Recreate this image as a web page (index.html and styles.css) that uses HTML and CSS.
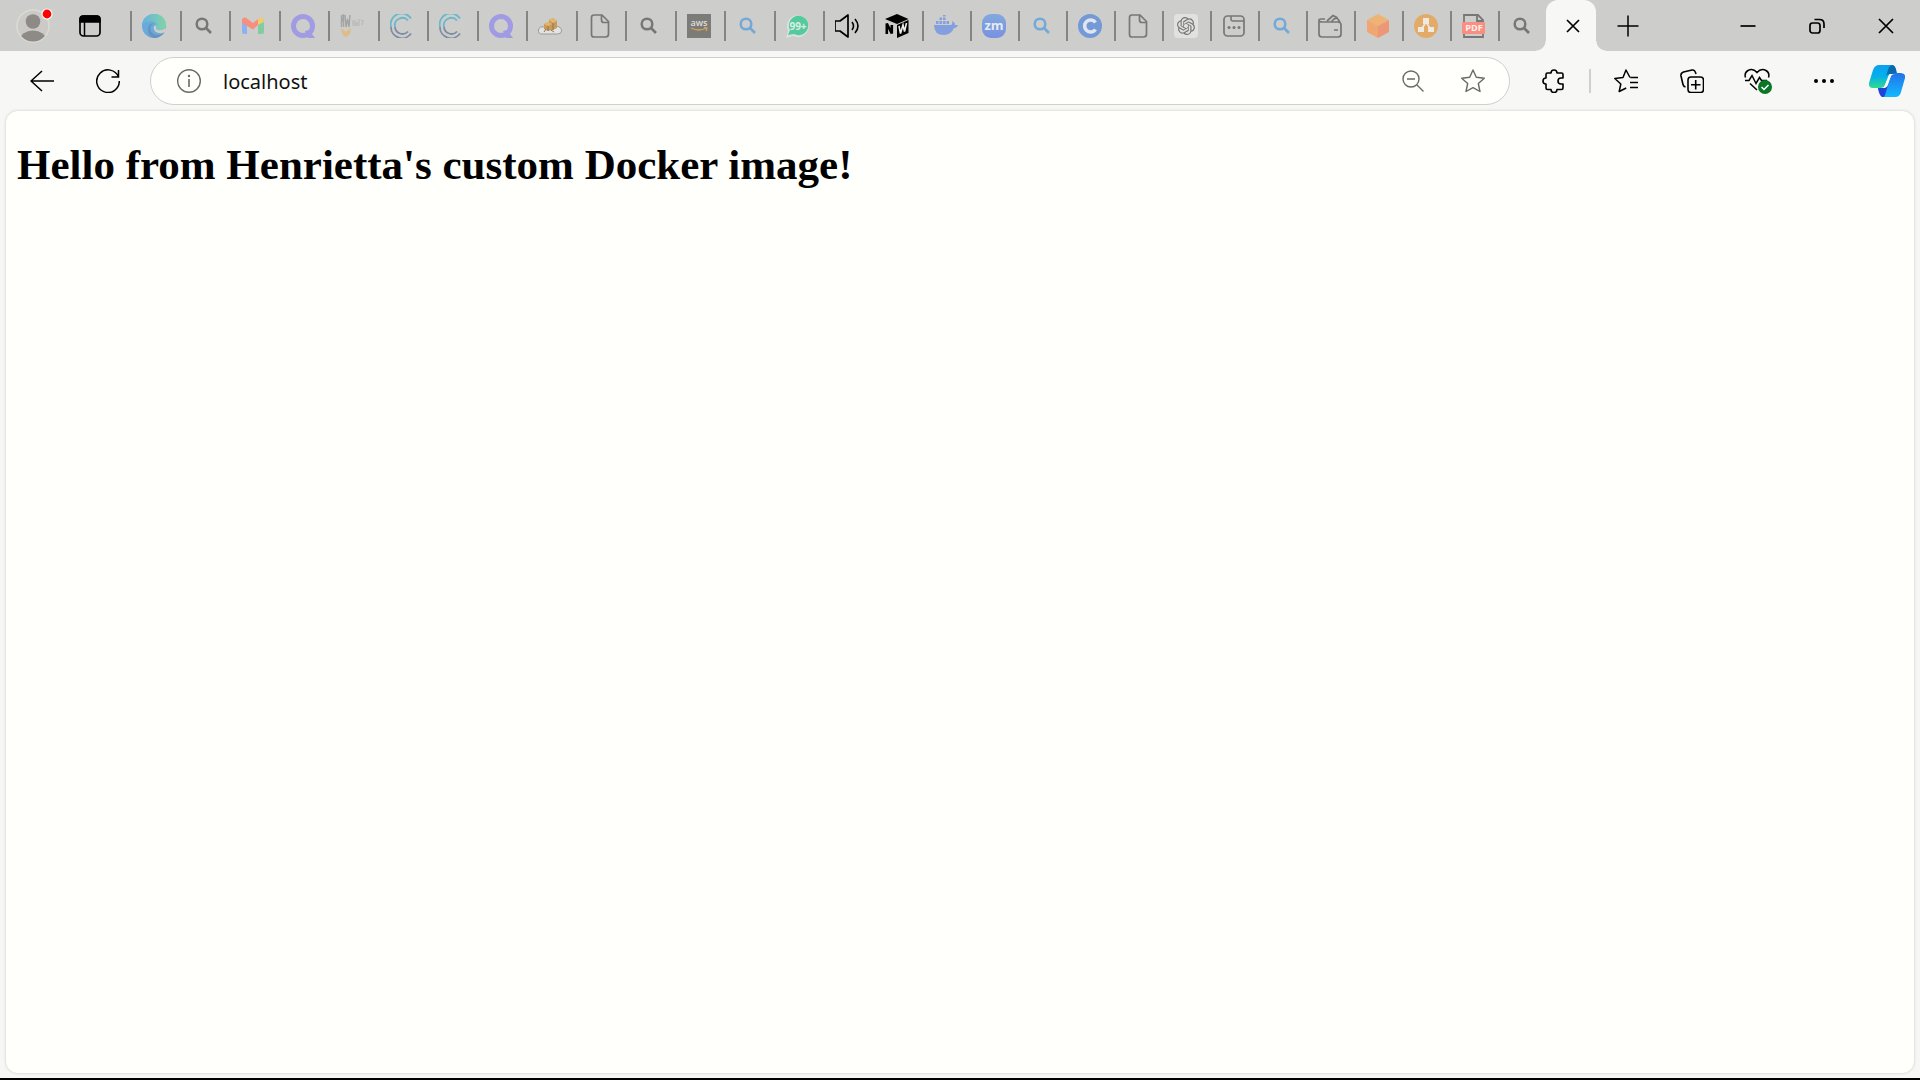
FILE: index.html
```html
<!DOCTYPE html>
<html lang="en">
<head>
<meta charset="utf-8">
<title>localhost</title>
<link rel="stylesheet" href="styles.css">
</head>
<body>
<svg class="symbols" aria-hidden="true">
  <symbol id="search" viewBox="0 0 24 24"><circle cx="10" cy="10" r="5.300" fill="none" stroke="currentColor" stroke-width="2.500"/><path d="M14 14l5 5" stroke="currentColor" stroke-width="2.700"/></symbol>
  <symbol id="quill" viewBox="0 0 24 24"><circle cx="12" cy="12" r="9.500" fill="none" stroke="#a19be3" stroke-width="5"/><path d="M14 17l4-1 6 8h-7z" fill="#a19be3"/></symbol>
  <symbol id="rings" viewBox="0 0 24 24"><g fill="none" stroke-width="1.800"><path d="M1 13A11 11 0 0 0 21 19.500M5 13a7.500 7.500 0 0 0 13 4.500" stroke="#7f8ba0"/><path d="M1 13A11 11 0 0 1 21 4.500M5 13a7.500 7.500 0 0 1 13-6.500" stroke="#69b8cb"/></g></symbol>
  <symbol id="page" viewBox="0 0 24 24"><path d="M6 1h8l6.500 6.500V20q0 3-3 3H6q-2.500 0-2.500-2.500v-17Q3.500 1 6 1zM13.500 1v5q0 2.500 2.500 2.500h4.500" fill="none" stroke="#777775" stroke-width="1.700"/></symbol>
</svg>
<header class="tabstrip">
  <div class="corner">
    <button class="profile" aria-label="Profile"><svg viewBox="0 0 38 36"><defs><clipPath id="face"><circle cx="17" cy="18" r="15.500"/></clipPath></defs><circle cx="17" cy="18" r="16" fill="#cbcac6" stroke="#dcdbd3" stroke-width="1.500"/><g clip-path="url(#face)" fill="#8e8b87"><circle cx="17" cy="13.500" r="7.300"/><ellipse cx="17" cy="32" rx="13" ry="9.500"/></g><circle cx="31" cy="6" r="5.500" fill="#f6ffff"/><circle cx="31" cy="6" r="4.400" fill="#f00"/></svg></button>
    <button class="plain" aria-label="Tab actions"><svg viewBox="0 0 24 24"><rect x="2" y="2" width="20" height="20" rx="3.500" fill="none" stroke="#000" stroke-width="1.700"/><path d="M2 8V5q0-3 3-3h14q3 0 3 3v3zM6.500 8v14" stroke="#000" stroke-width="1.500"/></svg></button>
  </div>
  <nav class="tabs wide" aria-label="Pinned tabs">
    <button aria-label="Edge"><svg viewBox="0 0 24 24"><defs><linearGradient id="edge" x1="0" x2="1"><stop stop-color="#68b1df"/><stop offset="1" stop-color="#80d5a5"/></linearGradient></defs><circle cx="12" cy="12" r="12" fill="#68aadb"/><path d="M0 11C1 4 6 0 12 0c7 0 12 5 12 10 0 4-3 6-6 6-3 0-4.500-1.500-4-2.500 2-2 0-6-5-6C5 7.500 1 9 0 11z" fill="url(#edge)"/><path d="M11.500 9.500c-4 2-4 7-1 9.500 3 3 8 2.500 12-.5C20 22 16 24 12 24c-4-1-6-5-6-8 0-4 2-7 5.500-6.500z" fill="#6993bd"/><path d="M13.500 11c1.500 1 .5 2.500.5 3.500 1 2 6 3 9.500-1v4c-4 3-9 2-11-1-1.500-2-1-4 1-5.500z" fill="#cdcdcb"/></svg></button>
    <button class="gray" aria-label="Search"><svg><use href="#search"/></svg></button>
    <button aria-label="Mail"><svg viewBox="0 0 24 24"><path d="M1 5v13q0 2 2 2h3V9z" fill="#8eb2ef"/><path d="M17 9l6-4v13q0 2-2 2h-4z" fill="#80cda0"/><path d="M1 7c0-4 3-4 5-2.500l6 4.500 5-4v6l-5 4.500L1 9z" fill="#f5907f"/><path d="M17 11V5c3-3 6-1 6 2v1z" fill="#efcb76"/></svg></button>
    <button aria-label="Learning"><svg><use href="#quill"/></svg></button>
    <button aria-label="Cloud notes"><svg viewBox="0 0 24 24"><g fill="none" stroke="#a3a4a4" stroke-width="1.400"><path d="M1.500 13V2l2-1v12M1 7h2.500M5 1l1 12 1.500-8L9 13l1-12M2 4l2 3"/><path d="M13 6v6M15 6v6l2-4v4M19 5v7M21 6l2 1-1 4" stroke="#bbb"/></g><path d="M1 14q4 3 5 3t5-3q0 7-5 9-5-2-5-9z" fill="#dfbd89"/><path d="M4 15h4l-2 3z" fill="#d0cecb"/></svg></button>
    <button aria-label="Course"><svg><use href="#rings"/></svg></button>
    <button aria-label="Course"><svg><use href="#rings"/></svg></button>
    <button aria-label="Learning"><svg><use href="#quill"/></svg></button>
    <button aria-label="Parcel cloud"><svg viewBox="0 0 24 24"><path d="M4 20q-4 0-3.500-4 1-4 5.500-3l12-1q6 1 5.500 5 0 3-4 3z" fill="#e4e3e1" stroke="#9b9b9a"/><path d="M11 6l4-2 4 3v7l-4 2-4-2zM6 10l4-2 4 2v6l-4 1-4-2z" fill="#c99b59"/><path d="M11 6l4-2 4 3-4 2zM6 10l4-2 4 2-4 2z" fill="#e3b66d"/><path d="M10 12v5M15 9v7M8 15l-2 3M13 16l3 2" stroke="#89745a" fill="none"/></svg></button>
    <button aria-label="Document"><svg><use href="#page"/></svg></button>
    <button class="gray" aria-label="Search"><svg><use href="#search"/></svg></button>
    <button aria-label="AWS"><svg viewBox="0 0 24 24"><path d="M0 0h24v24H0z" fill="#7b7b78"/><text class="mark" x="12" y="12" font-size="9" fill="#dededc">aws</text><path d="M4 14q8 4 15 0M17 13.500l3 .5-1 3" fill="none" stroke="#d6a15d" stroke-width="1.300"/></svg></button>
    <button class="blue" aria-label="Search"><svg><use href="#search"/></svg></button>
    <button aria-label="Messages"><svg viewBox="0 0 24 24"><path d="M0 24l2-7A11 11 0 1 1 7 22z" fill="#d9e1dc"/><path d="M2 21l2-5a9.700 9.700 0 1 1 4 4z" fill="#56ca9f"/><text class="mark strong" x="12" y="16" font-size="10" fill="#ddeee5">99+</text></svg></button>
    <button aria-label="Playing audio"><svg viewBox="0 0 24 24"><path d="M0 7h5l8-6v22l-8-6H0z" fill="none" stroke="#000" stroke-width="1.700" stroke-linejoin="round"/><path d="M17 8q3 4 0 8M20 5q6 7 0 14" fill="none" stroke="#000" stroke-width="1.600"/></svg></button>
    <button aria-label="Network"><svg viewBox="0 0 24 24"><path d="M0 5l12-5 11.500 5L12 10zM12 11l11.500-5v13L12 24z" fill="#000"/><path d="M1.800 20V9.500l5 10V11" fill="none" stroke="#000" stroke-width="2.600"/><path d="M14 12l1.500 7.500L18 11l1.500 6.500L21.500 9" fill="none" stroke="#eee" stroke-width="1.600"/></svg></button>
  </nav>
  <nav class="tabs narrow" aria-label="Tabs">
    <button aria-label="Docker"><svg viewBox="0 0 24 24"><path d="M0 11h17q2-1 1-4 3 1 3 4h3q-1 3-4 3-3 7-10 7Q0 21 0 11z" fill="#839fdf"/><path d="M2 7h2.500v3H2zM5.500 7H8v3H5.500zM9 7h2.500v3H9zM12.500 7H15v3h-2.500zM5.500 3.500H8V6H5.500zM9 3.500h2.500V6H9zM9 1h2.500v1.500H9z" fill="#839fdf"/></svg></button>
    <button aria-label="Meeting"><svg viewBox="0 0 24 24"><defs><linearGradient id="zm" x2="0" y2="1"><stop stop-color="#82a9de"/><stop offset="1" stop-color="#7891e2"/></linearGradient></defs><rect width="24" height="24" rx="9" fill="url(#zm)"/><text class="mark strong" x="12" y="16" font-size="13" fill="#e6eaf2">zm</text></svg></button>
    <button class="blue" aria-label="Search"><svg><use href="#search"/></svg></button>
    <button aria-label="Courses"><svg viewBox="0 0 24 24"><circle cx="12" cy="12" r="12" fill="#7399d6"/><path d="M17.500 15.500A6 6 0 1 1 17.500 8.500" fill="none" stroke="#e1e6ed" stroke-width="3.600"/></svg></button>
    <button aria-label="Document"><svg><use href="#page"/></svg></button>
    <button aria-label="Assistant"><svg viewBox="0 0 24 24"><rect width="24" height="24" rx="4" fill="#e1e1df"/><path transform="translate(3 3) scale(.75)" fill="#777775" d="M22.282 9.821a5.985 5.985 0 0 0-.516-4.910 6.046 6.046 0 0 0-6.510-2.900A6.065 6.065 0 0 0 4.981 4.182a5.985 5.985 0 0 0-3.998 2.900 6.046 6.046 0 0 0 .743 7.097 5.980 5.980 0 0 0 .511 4.911 6.051 6.051 0 0 0 6.515 2.900A5.985 5.985 0 0 0 13.260 24a6.056 6.056 0 0 0 5.772-4.206 5.990 5.990 0 0 0 3.998-2.900 6.056 6.056 0 0 0-.748-7.073zM13.260 22.430a4.476 4.476 0 0 1-2.876-1.040l.141-.081 4.779-2.758a.795.795 0 0 0 .393-.681v-6.737l2.020 1.169a.071.071 0 0 1 .038.052v5.583a4.504 4.504 0 0 1-4.495 4.493zM3.600 18.304a4.471 4.471 0 0 1-.535-3.014l.142.085 4.783 2.759a.771.771 0 0 0 .781 0l5.843-3.369v2.332a.080.080 0 0 1-.033.062L9.740 19.950a4.500 4.500 0 0 1-6.140-1.646zM2.341 7.896a4.485 4.485 0 0 1 2.366-1.973V11.600a.766.766 0 0 0 .388.677l5.814 3.354-2.020 1.169a.076.076 0 0 1-.071 0l-4.830-2.787A4.504 4.504 0 0 1 2.341 7.872zm16.597 3.855l-5.833-3.387L15.119 7.200a.076.076 0 0 1 .071 0l4.830 2.791a4.494 4.494 0 0 1-.676 8.105v-5.678a.790.790 0 0 0-.407-.667zm2.010-3.023l-.141-.085-4.774-2.782a.776.776 0 0 0-.785 0L9.409 9.230V6.897a.066.066 0 0 1 .028-.061l4.830-2.787a4.500 4.500 0 0 1 6.680 4.660zM8.307 12.863l-2.020-1.164a.080.080 0 0 1-.038-.057V6.075a4.500 4.500 0 0 1 7.376-3.454l-.142.081L8.704 5.460a.795.795 0 0 0-.393.681zm1.097-2.365l2.602-1.500 2.607 1.500v2.999l-2.597 1.500-2.607-1.500z"/></svg></button>
    <button aria-label="New window"><svg viewBox="0 0 24 24"><rect x="2" y="2" width="20" height="20" rx="3.500" fill="none" stroke="#777775" stroke-width="1.700"/><path d="M9 2v3q0 2 2 2h11" fill="none" stroke="#777775" stroke-width="1.600"/><g fill="#777775"><circle cx="7" cy="13.500" r="1.500"/><circle cx="12" cy="13.500" r="1.500"/><circle cx="17" cy="13.500" r="1.500"/></g></svg></button>
    <button class="blue" aria-label="Search"><svg><use href="#search"/></svg></button>
    <button aria-label="Wallet"><svg viewBox="0 0 24 24"><path d="M1 6v14q0 3 3 3h16q3 0 3-3v-9q0-3-3-3H4Q1 8 1 6q0-1 2-1h4M16 16h4M9 7l6-5.500 3 1.500-5 5M16 5l3-1 3 4" fill="none" stroke="#777775" stroke-width="1.700"/></svg></button>
    <button aria-label="Package"><svg viewBox="0 0 24 24"><path d="M12 0l11 6-11 6L1 6z" fill="#edb475"/><path d="M1 6l11 6v12L1 18z" fill="#f0a671"/><path d="M23 6l-11 6v12l11-6z" fill="#ec9775"/></svg></button>
    <button aria-label="Diagram"><svg viewBox="0 0 24 24"><circle cx="12" cy="12" r="12" fill="#e2ac68"/><path d="M12 8l-5 8M12 8l5 8" stroke="#eee9e1" stroke-width="1.500"/><path d="M9 4h6v6H9zM4 13h6v5H4zM14 13h6v5h-6z" fill="#eee9e1"/></svg></button>
    <button aria-label="PDF"><svg viewBox="0 0 24 24"><path d="M2 8V1h14l5 5v2M2 19v4h19v-4M15 1v6h6" fill="none" stroke="#777775" stroke-width="1.800"/><rect y="8" width="23" height="12" rx="1" fill="#fb8e82"/><text class="mark strong" x="12" y="17" font-size="9" fill="#fff1eb">PDF</text></svg></button>
    <button class="gray" aria-label="Search"><svg><use href="#search"/></svg></button>
  </nav>
  <button class="active-tab" aria-label="Close localhost tab"><svg viewBox="0 0 24 24"><path d="M6 6l12 12M18 6L6 18" stroke="#000" stroke-width="1.700"/></svg></button>
  <button class="new-tab" aria-label="New tab"><svg viewBox="0 0 24 24"><path d="M12 1.500v21M1.500 12h21" stroke="#000" stroke-width="1.500"/></svg></button>
  <div class="window-controls">
    <button aria-label="Minimize"><svg viewBox="0 0 24 24"><path d="M4.500 12h15" stroke="#000" stroke-width="1.700"/></svg></button>
    <button aria-label="Restore"><svg viewBox="0 0 24 24"><rect x="5" y="9" width="10" height="10" rx="2.500" fill="none" stroke="#000" stroke-width="1.700"/><path d="M9.500 5.500h5q4.500 0 4.500 4.500v4" fill="none" stroke="#000" stroke-width="1.700"/></svg></button>
    <button aria-label="Close"><svg viewBox="0 0 24 24"><path d="M5 5l14 14M19 5L5 19" stroke="#000" stroke-width="1.700"/></svg></button>
  </div>
</header>
<div class="toolbar">
  <button aria-label="Back"><svg viewBox="0 0 24 24"><path d="M24 12H1M12 2L1 12l11 10" fill="none" stroke="#000" stroke-width="1.500"/></svg></button>
  <button aria-label="Refresh"><svg viewBox="0 0 24 24"><path d="M22.500 8A11.300 11.300 0 1 0 23.300 12M22.500 1v7h-7" fill="none" stroke="#000" stroke-width="1.500"/></svg></button>
  <form class="address">
    <button type="button" aria-label="Site information"><svg viewBox="0 0 24 24"><circle cx="12" cy="12" r="11.300" fill="none" stroke="#696967" stroke-width="1.400"/><path d="M12 10v8" stroke="#696967" stroke-width="1.600"/><circle cx="12" cy="7" r="1.200" fill="#696967"/></svg></button>
    <input type="text" value="localhost" aria-label="Address">
    <button type="button" aria-label="Zoom out"><svg viewBox="0 0 24 24"><circle cx="10" cy="10" r="8" fill="none" stroke="#696967" stroke-width="1.400"/><path d="M6 10h8M16 16l6.500 6.500" stroke="#696967" stroke-width="1.400"/></svg></button>
    <button type="button" aria-label="Add favorite"><svg viewBox="0 0 24 24"><path d="M12 1l3.300 7.200 8 1-6 5.300 1.700 8L12 18.600 5 22.500l1.700-8-6-5.300 8-1z" fill="none" stroke="#696967" stroke-width="1.400" stroke-linejoin="round"/></svg></button>
  </form>
  <button aria-label="Extensions"><svg viewBox="0 0 24 24"><path d="M5.500 4H9q0-3 3-3t3 3h4.500Q21 4 21 5.500V9h-2q-3 0-3 3t3 3h2v4q0 1.500-1.500 1.500H15q0 3-3 3t-3-3H5.500Q4 20.500 4 19v-4q-3 0-3-3t3-3V5.500Q4 4 5.500 4z" fill="none" stroke="#000" stroke-width="1.600" stroke-linejoin="round"/></svg></button>
  <span class="divider"></span>
  <button aria-label="Favorites"><svg viewBox="0 0 24 24"><path d="M16 8.500L12 1 9 8.500.8 9.500l6 5.500-1.600 7.500 7-3.500M16.500 8.500H24M16 13.500h8M16 18.500h8" fill="none" stroke="#000" stroke-width="1.500" stroke-linejoin="round"/></svg></button>
  <button aria-label="Collections"><svg viewBox="0 0 24 24"><rect x="8" y="8" width="15.500" height="15.500" rx="3" fill="none" stroke="#000" stroke-width="1.600"/><path d="M15.700 11v9.500M11 15.700h9.500M5.500 18Q3.500 17.500 3 15.500L1 7q-.5-3 2.500-4L12 1q3-.5 4 4" fill="none" stroke="#000" stroke-width="1.600"/></svg></button>
  <button aria-label="Browser essentials"><svg class="essentials" viewBox="0 0 28 26"><path d="M1.500 9.500Q0 5 4 2.500q5-2.500 9 2 4-4.500 9-2 4 2.500 2.500 7M1 12.500h4l3-5 4 8 3.500-6 2 3H23M6 15.500l7 6.500" fill="none" stroke="#000" stroke-width="1.500"/><circle cx="21" cy="19" r="7" fill="#0b7628"/><path d="M17.500 19l2.500 2.500 4.500-4.500" fill="none" stroke="#fff" stroke-width="1.500"/></svg></button>
  <button aria-label="More"><svg viewBox="0 0 24 24"><circle cx="4" cy="12" r="2" /><circle cx="12" cy="12" r="2"/><circle cx="20" cy="12" r="2"/></svg></button>
  <button class="copilot" aria-label="Copilot"><svg viewBox="0 0 36 32"><defs><linearGradient id="cl" x2="0" y2="1"><stop stop-color="#0aa0f5"/><stop offset=".5" stop-color="#06b0e8"/><stop offset="1" stop-color="#2fdc8c"/></linearGradient><linearGradient id="cr" x2="0" y2="1"><stop stop-color="#2372e8"/><stop offset="1" stop-color="#12baff"/></linearGradient></defs><path d="M10 0h13q3 0 4 6l1 3h-7l-5 11q-1 3-4 3H5q-6 0-5-5L4 5q2-5 6-5z" fill="url(#cl)"/><path d="M20 2q2-2 4-2 3 1 4 9h-7q-3 0-4 2z" fill="#0969ad"/><path d="M9 23h5q4 0 5-4l3-8q1-3 4-3h5q6 0 5 5l-4 14q-1 5-6 5H15q-4 0-6-9z" fill="url(#cr)"/><path d="M9 23h6q3 0 4-3l-3 10q-1 3-3 2-3-2-4-9z" fill="#2442da"/><path d="M21 9h5q-4 0-5 4l-2 6q-1 4-5 4h-2q3 0 4-3l3-8q1-3 2-3z" fill="#fff"/></svg></button>
</div>
<main class="content">
  <h1>Hello from Henrietta's custom Docker image!</h1>
</main>
</body>
</html>
```
FILE: styles.css
```css
* { box-sizing: border-box; }

body {
  margin: 0;
  min-height: 100vh;
  display: flex;
  flex-direction: column;
  background: #f7f7f5;
  border-bottom: 2px solid #000;
}

button {
  display: flex;
  align-items: center;
  justify-content: center;
  flex: none;
  padding: 0;
  border: 0;
  background: none;
  color: #000;
}

svg { display: block; width: 24px; height: 24px; flex: none; }
.symbols { position: absolute; width: 0; height: 0; }

.mark {
  font-family: "Open Sans", sans-serif;
  font-weight: 600;
  text-anchor: middle;
}
.strong { font-weight: 700; }

.tabstrip {
  display: flex;
  height: 51px;
  background: #cdcdcb;
}
.corner {
  display: flex;
  align-items: center;
  width: 130px;
  padding-left: 16px;
}
.profile svg { width: 38px; height: 36px; }
.plain { margin-left: 24px; }

.tabs { display: grid; grid-auto-flow: column; grid-auto-columns: 1fr; align-items: center; }
.wide { width: 792px; }
.narrow { width: 624px; }
.tabs button {
  height: 30px;
  padding-left: 10px;
  justify-content: flex-start;
  border-left: 2px solid #858583;
}
.tabs .gray { color: #777775; }
.tabs .blue { color: #72a9d6; }

.active-tab {
  position: relative;
  width: 50px;
  padding-left: 3px;
  border-radius: 12px 12px 0 0;
  background: #f7f7f5;
}
.active-tab::before,
.active-tab::after {
  content: "";
  position: absolute;
  bottom: 0;
  width: 10px;
  height: 10px;
}
.active-tab::before {
  right: 100%;
  background: radial-gradient(circle at 0 0, #cdcdcb 9px, #f7f7f5 10px);
}
.active-tab::after {
  left: 100%;
  background: radial-gradient(circle at 100% 0, #cdcdcb 9px, #f7f7f5 10px);
}
.new-tab { width: 64px; }
.window-controls { display: flex; margin-left: auto; }
.window-controls button { width: 69px; }

.toolbar {
  display: flex;
  align-items: center;
  height: 60px;
  padding: 0 3px 0 9px;
}
.toolbar > button { width: 66px; height: 48px; }
.toolbar > .copilot { width: 60px; }
.copilot svg { width: 36px; height: 32px; }
.essentials { width: 28px; height: 26px; }
.divider { width: 2px; height: 24px; margin: 0 2px; background: #cfcfcd; }

.address {
  display: flex;
  align-items: center;
  flex: 1;
  height: 48px;
  margin: 0 11px 0 9px;
  padding: 0 6px 0 8px;
  border: 1px solid #cfcfcd;
  border-radius: 24px;
  background: #fffffc;
}
.address button { width: 60px; height: 40px; }
.address input {
  flex: 1;
  min-width: 0;
  padding: 2px 0 0 4px;
  border: 0;
  outline: 0;
  background: none;
  color: #111;
  font: 20px/28px "Noto Sans", sans-serif;
}

.content {
  flex: 1;
  margin: 0 6px 5px;
  padding: 29px 11px;
  border-radius: 12px;
  background: #fffffc;
  box-shadow: 0 0 3px #c4c4c2;
}
h1 {
  margin: 0;
  color: #000;
  font: bold 43px/50px "Liberation Serif", serif;
}
```
